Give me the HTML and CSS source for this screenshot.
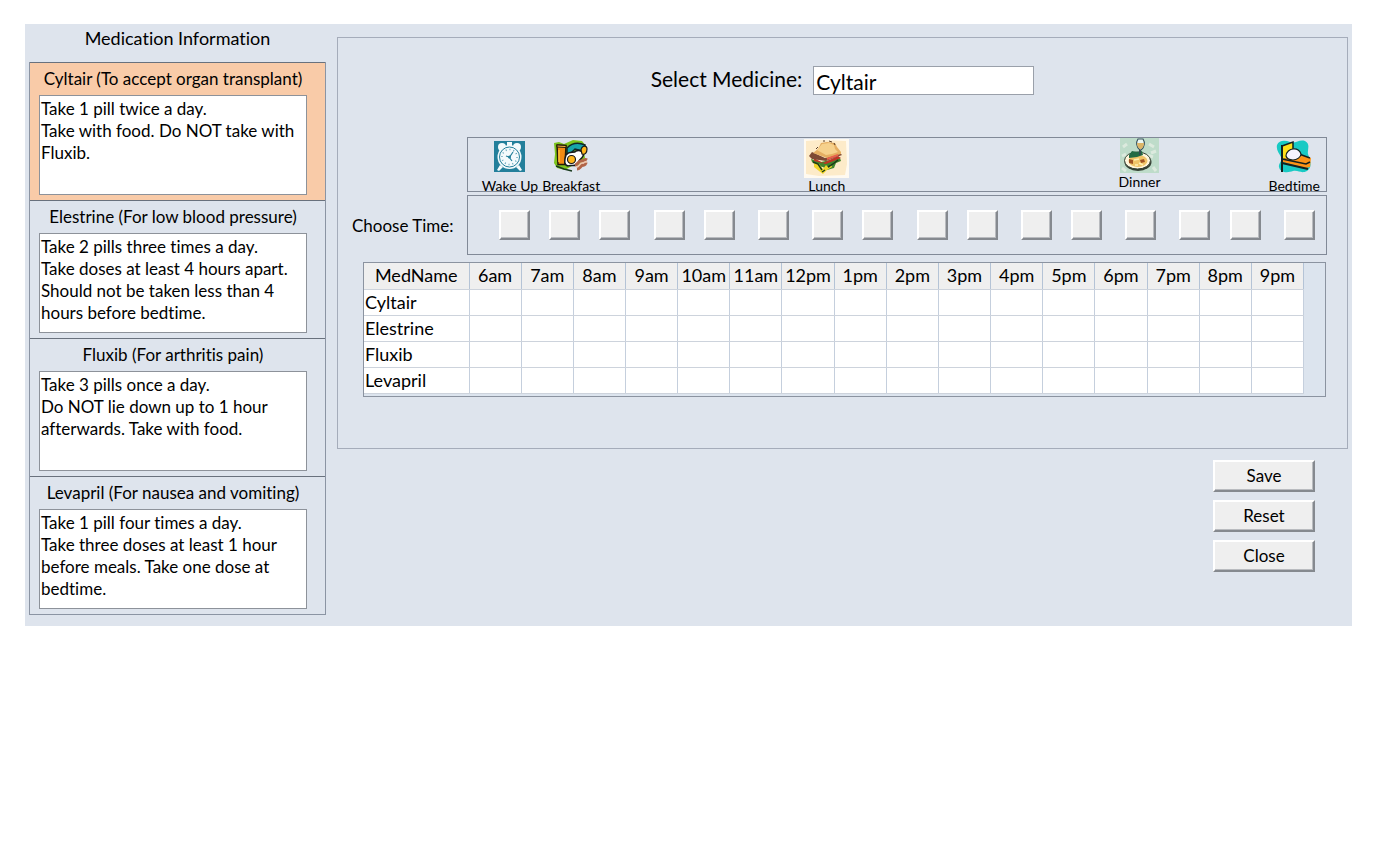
FILE: index.html
```html
<!DOCTYPE html>
<html lang="en">
<head>
    <meta charset="UTF-8">
    <meta name="viewport" content="width=device-width, initial-scale=1.0">
    <title>Medication Information</title>
    <link rel="stylesheet" href="styles.css">
</head>
<body>
    <div class="app">
        <aside class="sidebar">
            <h1>Medication Information</h1>
            <div class="cards">
                <div class="card selected">
                    <label for="info1">Cyltair (To accept organ transplant)</label>
                    <textarea id="info1" readonly>Take 1 pill twice a day.
Take with food. Do NOT take with Fluxib.</textarea>
                </div>
                <div class="card">
                    <label for="info2">Elestrine (For low blood pressure)</label>
                    <textarea id="info2" readonly>Take 2 pills three times a day.
Take doses at least 4 hours apart. Should not be taken less than 4 hours before bedtime.</textarea>
                </div>
                <div class="card">
                    <label for="info3">Fluxib (For arthritis pain)</label>
                    <textarea id="info3" readonly>Take 3 pills once a day.
Do NOT lie down up to 1 hour afterwards. Take with food.</textarea>
                </div>
                <div class="card">
                    <label for="info4">Levapril (For nausea and vomiting)</label>
                    <textarea id="info4" readonly>Take 1 pill four times a day.
Take three doses at least 1 hour before meals. Take one dose at bedtime.</textarea>
                </div>
            </div>
        </aside>

        <main class="main">
            <section class="panel">
                <div class="select-row">
                    <label for="medicine">Select Medicine:</label>
                    <select id="medicine">
                        <option>Cyltair</option>
                        <option>Elestrine</option>
                        <option>Fluxib</option>
                        <option>Levapril</option>
                    </select>
                </div>

                <div class="schedule">
                    <div class="meals">
                        <div class="meal wake">
                            <svg width="31" height="40" viewBox="0 0 31 40" aria-hidden="true">
                                <rect y="3" width="31" height="31" fill="#237f9b"/>
                                <g fill="#f4fafc">
                                    <circle cx="8" cy="9" r="4"/>
                                    <circle cx="23" cy="9" r="4"/>
                                    <path d="M13 4h5v4h-5zM6 27l3 2-4 4-2-1zM25 27l-3 2 4 4 2-1z"/>
                                    <circle cx="15.500" cy="19" r="12"/>
                                </g>
                                <circle cx="15.500" cy="19" r="10" fill="none" stroke="#237f9b" stroke-width="1"/>
                                <circle cx="15.500" cy="19" r="7.500" fill="none" stroke="#5fa3b8" stroke-width="1.500" stroke-dasharray="1 2.900"/>
                                <path d="M15 20l4-6M15 19l-3-1M15 19l3 4" fill="none" stroke="#237f9b" stroke-width="1.200"/>
                                <circle cx="15.500" cy="19" r="1.500" fill="#237f9b"/>
                            </svg>
                            <span>Wake Up</span>
                        </div>
                        <div class="meal breakfast">
                            <svg width="36" height="40" viewBox="0 0 36 40" aria-hidden="true">
                                <path d="M1 5l5-1 5 2 9-4 9 1 4 5-2 6 1 6-5 7-8 1-7 4-8-2-3-5 1-9z" fill="#7cc51d"/>
                                <path d="M14 10c5-5 11-6 18-3l-2 6-8-2-8 8z" fill="#16a5aa" stroke="#10252a" stroke-width="1.500"/>
                                <path d="M4 7l9 .5-1 19H5z" fill="#f28b13" stroke="#241b08" stroke-width="1.500"/>
                                <path d="M4 7l9 .5v2L4 9z" fill="#ffb84a" stroke="#241b08"/>
                                <path d="M6 12v12" stroke="#ffc33d" stroke-width="1.500"/>
                                <path d="M13 17c4-5 8-1 10-4 4-2 9 2 7 5-1 3-4 3-5 7-3 5-7 1-10 3-4-1-4-5-2-11z" fill="#fff" stroke="#17191c" stroke-width="1.500"/>
                                <circle cx="18.500" cy="21.500" r="4" fill="#ffb61b" stroke="#17191c" stroke-width="1.200"/>
                                <path d="M28 12c1-5 6-5 6-1s-2 6-5 5z" fill="#ffb61b" stroke="#17191c" stroke-width="1.200"/>
                                <path d="M22 27c3 0 3-4 6-4 3 1 3-3 6-1M24 31c3 0 3-3 6-4 2 1 2-2 4-1" fill="none" stroke="#b26447" stroke-width="3"/>
                                <path d="M23 29c4 0 3-4 6-4s3-2 5-1" fill="none" stroke="#f0c3a6" stroke-width="1.500"/>
                                <path d="M3 28l8 3 8 2" fill="none" stroke="#17391c" stroke-width="1.500"/>
                            </svg>
                            <span>Breakfast</span>
                        </div>
                        <div class="meal lunch">
                            <svg width="45" height="40" viewBox="0 0 45 40" aria-hidden="true">
                                <rect y="1" width="45" height="39" fill="#fffaf0"/>
                                <path d="M2 3l13-1 27 1 1 23-2 11-26 1L2 36z" fill="#fdebc9"/>
                                <path d="M7 21l10 3 19-4 1 3-5 2-2 5-7 2-4-3-6-1-5-4z" fill="#41852b"/>
                                <path d="M10 25l5 1 4 5 3-4 3 3 2-4 1 3-5 3-4 4-4-3-5-4z" fill="#f1d62a"/>
                                <path d="M10 20l9 5 15-7 3 2-15 6-12-3z" fill="#bf3425"/>
                                <path d="M9 24l5 2 4 6M24 29l5-3 5-4M18 34l3-2" fill="none" stroke="#193b1a" stroke-width="1.500"/>
                                <path d="M5 18l3-4 13 6 15-5 2 2-16 6L8 21z" fill="#7d4934"/>
                                <path d="M9 15l5-4 3-6 6-1 8 1 2 4 4 5v2l-14 4z" fill="#e5ae62"/>
                                <path d="M13 12l5-6 7-1 5 2 1 4 3 3-6 2-6 1z" fill="#f6d18c"/>
                                <path d="M19 3h2M25 3l3 1M30 5l1 2M12 11l2-2" fill="none" stroke="#5a3e28" stroke-width="1"/>
                                <path d="M23 21l11-4" stroke="#e8614c" stroke-width="2"/>
                            </svg>
                            <span>Lunch</span>
                        </div>
                        <div class="meal dinner">
                            <svg width="39" height="36" viewBox="0 0 39 36" aria-hidden="true">
                                <rect width="39" height="35" fill="#bedcca"/>
                                <path d="M3 9l4-3M29 6l5 3M31 15l5-2M2 30l4 3M33 29l3 4M6 16l-4 2M27 17l6 2" stroke="#dceade" stroke-width="3"/>
                                <ellipse cx="18" cy="24" rx="13.500" ry="9" fill="#333f32"/>
                                <ellipse cx="17.500" cy="22.500" rx="13" ry="8.500" fill="#fff6dc" stroke="#344133" stroke-width="1"/>
                                <ellipse cx="18" cy="23" rx="9.500" ry="6" fill="#f1c568"/>
                                <path d="M9 17l3-4 5 1 5-1 1 4-6 2-8 1z" fill="#236b43"/>
                                <path d="M9 21l4 1v4l-4-1zM20 22l4-1 1 3-4 1z" fill="#a15524"/>
                                <path d="M14 22l5-1M19 25l4 2M15 27h3" stroke="#fff0b0" stroke-width="1.500"/>
                                <path d="M18 1h5c2 3 2 8-2 11h-1c-4-3-4-8-2-11z" fill="#eaf7f2" stroke="#38535d" stroke-width="1.200"/>
                                <path d="M17 5h7c0 3-1 5-3 6h-1c-2-1-3-3-3-6z" fill="#dcb568"/>
                                <path d="M20 12v5" stroke="#334b50" stroke-width="2"/>
                            </svg>
                            <span>Dinner</span>
                        </div>
                        <div class="meal bed">
                            <svg width="36" height="40" viewBox="0 0 36 40" aria-hidden="true">
                                <path d="M1 7c2-5 8-5 13-3 6 2 9-3 15-1 6 3 2 9 3 13 2 6 5 13-1 17-6 3-8-1-14 0-5 2-13 2-14-4-1-4 4-6 2-10-2-4-5-7-4-12z" fill="#19cac4"/>
                                <path d="M6 8l11-4v9l-4 7-7 2z" fill="#ffe01b" stroke="#13201f" stroke-width="1.500"/>
                                <path d="M7 21l16-5 12 4-1 9-5 1L7 24z" fill="#fc9317"/>
                                <path d="M23 16l11 4M6 21l24 5 4-2" fill="none" stroke="#13201f" stroke-width="1.500"/>
                                <path d="M6 25l26 6" stroke="#13201f" stroke-width="2"/>
                                <path d="M6 7v27" stroke="#13201f" stroke-width="2"/>
                                <path d="M10 18c0-4 4-7 7-7 4-1 7 2 8 5 0 3-4 6-8 6-3 0-6-1-7-4z" fill="#f5f3ff" stroke="#13201f" stroke-width="1.200"/>
                            </svg>
                            <span>Bedtime</span>
                        </div>
                    </div>

                    <span class="choose" id="choose">Choose Time:</span>
                    <div class="times" role="group" aria-labelledby="choose">
                        <input type="checkbox" aria-label="6am">
                        <input type="checkbox" aria-label="7am">
                        <input type="checkbox" aria-label="8am">
                        <input type="checkbox" aria-label="9am" class="spaced">
                        <input type="checkbox" aria-label="10am">
                        <input type="checkbox" aria-label="11am" class="spaced">
                        <input type="checkbox" aria-label="12pm" class="spaced">
                        <input type="checkbox" aria-label="1pm">
                        <input type="checkbox" aria-label="2pm" class="spaced">
                        <input type="checkbox" aria-label="3pm">
                        <input type="checkbox" aria-label="4pm" class="spaced">
                        <input type="checkbox" aria-label="5pm">
                        <input type="checkbox" aria-label="6pm" class="spaced">
                        <input type="checkbox" aria-label="7pm" class="spaced">
                        <input type="checkbox" aria-label="8pm">
                        <input type="checkbox" aria-label="9pm" class="spaced">
                    </div>
                </div>

                <div class="table-box">
                    <table>
                        <thead>
                            <tr>
                                <th class="name">MedName</th>
                                <th>6am</th><th>7am</th><th>8am</th><th>9am</th>
                                <th>10am</th><th>11am</th><th>12pm</th><th>1pm</th>
                                <th>2pm</th><th>3pm</th><th>4pm</th><th>5pm</th>
                                <th>6pm</th><th>7pm</th><th>8pm</th><th>9pm</th>
                            </tr>
                        </thead>
                        <tbody>
                            <tr><td>Cyltair</td><td></td><td></td><td></td><td></td><td></td><td></td><td></td><td></td><td></td><td></td><td></td><td></td><td></td><td></td><td></td><td></td></tr>
                            <tr><td>Elestrine</td><td></td><td></td><td></td><td></td><td></td><td></td><td></td><td></td><td></td><td></td><td></td><td></td><td></td><td></td><td></td><td></td></tr>
                            <tr><td>Fluxib</td><td></td><td></td><td></td><td></td><td></td><td></td><td></td><td></td><td></td><td></td><td></td><td></td><td></td><td></td><td></td><td></td></tr>
                            <tr><td>Levapril</td><td></td><td></td><td></td><td></td><td></td><td></td><td></td><td></td><td></td><td></td><td></td><td></td><td></td><td></td><td></td><td></td></tr>
                        </tbody>
                    </table>
                </div>
            </section>

            <div class="actions">
                <button type="button">Save</button>
                <button type="button">Reset</button>
                <button type="button">Close</button>
            </div>
        </main>
    </div>
</body>
</html>
```
FILE: styles.css
```css
* {
    box-sizing: border-box;
}
body {
    margin: 24px 48px 24px 25px;
    background: #fff;
    color: #000;
    font-family: Lato, "Noto Sans", sans-serif;
    font-size: 17px;
    font-variant-ligatures: none;
}
select, textarea, button, input {
    margin: 0;
    font-family: inherit;
    font-variant-ligatures: inherit;
    color: inherit;
}
.app {
    display: grid;
    grid-template-columns: 297px minmax(0, 1fr);
    gap: 11px;
    padding: 0 4px 11px;
    background: #dee4ed;
}

/* left column */
h1 {
    margin: 0;
    padding-top: 3px;
    height: 38px;
    font-size: 18px;
    line-height: 22px;
    font-weight: normal;
    text-align: center;
}
.cards {
    border: 1px solid #8b94a3;
    border-top: none;
}
.card {
    padding: 0 18px 5px 9px;
    border-top: 1px solid #69717d;
}
.card.selected {
    background: #f9cba8;
}
.card label {
    display: block;
    line-height: 32px;
    text-align: center;
    white-space: nowrap;
}
.card textarea {
    display: block;
    width: 100%;
    height: 100px;
    padding: 2px 1px;
    border: 1px solid #8d929a;
    border-radius: 0;
    background: #fff;
    font-size: 17px;
    line-height: 22px;
    resize: none;
    overflow: hidden;
    outline: none;
}

/* right side */
.panel {
    margin-top: 13px;
    padding: 28px 20px 51px 14px;
    border: 1px solid #a5acba;
}
.select-row {
    display: flex;
    justify-content: center;
    gap: 11px;
    margin-bottom: 42px;
    padding-left: 6px;
    font-size: 21px;
    line-height: 26px;
}
.select-row select {
    appearance: none;
    width: 221px;
    height: 29px;
    padding: 2px 2px 0;
    border: 1px solid #9aa0aa;
    border-radius: 0;
    background: #fff;
    font-size: 21px;
    line-height: 26px;
}
.schedule {
    display: grid;
    grid-template-columns: 115px minmax(0, 1fr);
    row-gap: 3px;
    align-items: center;
}
.meals {
    grid-column: 2;
    display: grid;
    grid-template-columns: repeat(16, minmax(0, 1fr));
    column-gap: 4px;
    height: 55px;
    padding: 0 6px 0 22px;
    border: 1px solid #818997;
}
.meal {
    display: flex;
    flex-direction: column;
    align-items: center;
    justify-self: center;
    font-size: 14px;
    line-height: 15px;
    white-space: nowrap;
}
.meal svg {
    display: block;
}
.wake {
    grid-column: 1;
    justify-self: end;
}
.breakfast {
    grid-column: 2;
    justify-self: start;
}
.lunch {
    grid-column: 7;
}
.dinner {
    grid-column: 13;
}
.bed {
    grid-column: 16;
    justify-self: end;
}
.times {
    display: flex;
    justify-content: space-between;
    align-items: center;
    height: 60px;
    padding: 0 11px 0 31px;
    border: 1px solid #818997;
}
.times input, .actions button {
    appearance: none;
    border: 2px solid;
    border-color: #fff #85898f #85898f #fff;
    border-radius: 0;
    background: #efefef;
    box-shadow: inset -1px -1px 0 #b9bbbf;
}
.times input {
    width: 31px;
    height: 30px;
}
.times .spaced {
    margin-left: 4px;
}
.times input:checked {
    border-color: #85898f #fff #fff #85898f;
}
.table-box {
    margin: 7px 1px 0 11px;
    padding: 0 21px 2px 0;
    border: 1px solid #8b93a0;
    background: #dce4ee;
}
table {
    width: 100%;
    table-layout: fixed;
    border-collapse: collapse;
    background: #fff;
    font-size: 18px;
    line-height: 25px;
}
th, td {
    height: 26px;
    padding: 0;
    border-right: 1px solid #c5cfdd;
    border-bottom: 1px solid #cdd3dc;
    text-align: left;
    white-space: nowrap;
}
th {
    background: #efefef;
    border-right-color: #b4c3d6;
    font-weight: normal;
    text-align: center;
}
th.name {
    width: 105px;
}
td {
    padding-left: 1px;
}
.actions {
    display: flex;
    flex-direction: column;
    align-items: flex-end;
    gap: 8px;
    padding: 11px 33px 0 0;
}
.actions button {
    width: 102px;
    height: 32px;
    padding: 0;
    font-size: 17px;
}
```
